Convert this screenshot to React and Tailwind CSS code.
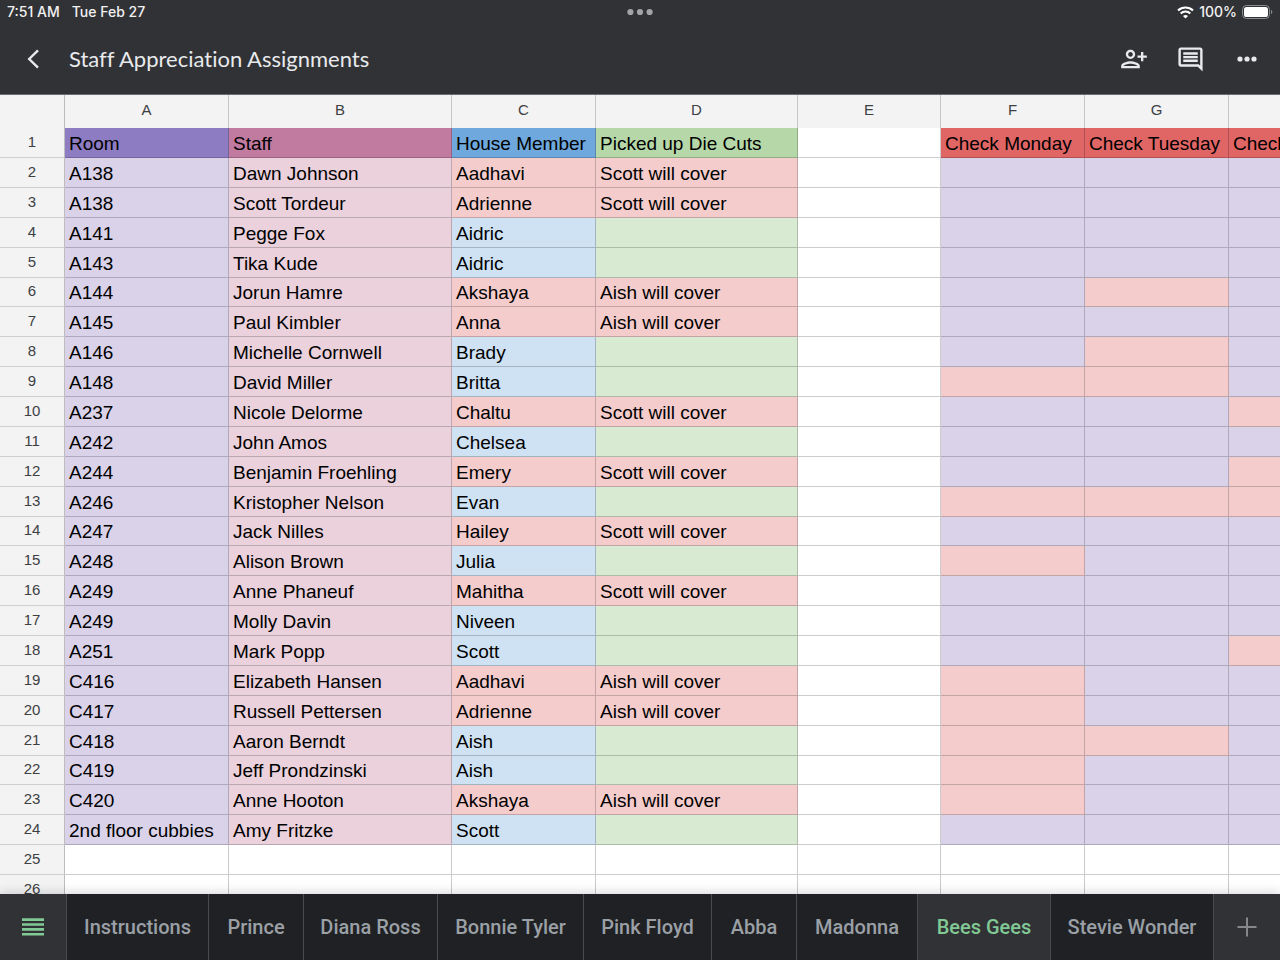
import React, { useState } from 'react';
import { MdOutlineComment } from 'react-icons/md';

const columns = [
  { name: 'A', width: 'w-[164px]' },
  { name: 'B', width: 'w-[223px]' },
  { name: 'C', width: 'w-[144px]' },
  { name: 'D', width: 'w-[202px]' },
  { name: 'E', width: 'w-[143px]' },
  { name: 'F', width: 'w-[144px]' },
  { name: 'G', width: 'w-[144px]' },
  { name: 'H', width: 'w-[144px]' },
];

const titles = [
  { text: 'Room', color: 'bg-[#8e7cc3]' },
  { text: 'Staff', color: 'bg-[#c27ba0]' },
  { text: 'House Member', color: 'bg-[#6fa8dc]' },
  { text: 'Picked up Die Cuts', color: 'bg-[#b6d7a8]' },
  { text: '', color: 'bg-white' },
  { text: 'Check Monday', color: 'bg-[#e06666]' },
  { text: 'Check Tuesday', color: 'bg-[#e06666]' },
  { text: 'Check Wednesday', color: 'bg-[#e06666]' },
];

// missed lists the check days (F, G, H) that are marked red
const rows = [
  { room: 'A138', staff: 'Dawn Johnson', member: 'Aadhavi', cover: 'Scott will cover', missed: '' },
  { room: 'A138', staff: 'Scott Tordeur', member: 'Adrienne', cover: 'Scott will cover', missed: '' },
  { room: 'A141', staff: 'Pegge Fox', member: 'Aidric', cover: '', missed: '' },
  { room: 'A143', staff: 'Tika Kude', member: 'Aidric', cover: '', missed: '' },
  { room: 'A144', staff: 'Jorun Hamre', member: 'Akshaya', cover: 'Aish will cover', missed: 'G' },
  { room: 'A145', staff: 'Paul Kimbler', member: 'Anna', cover: 'Aish will cover', missed: '' },
  { room: 'A146', staff: 'Michelle Cornwell', member: 'Brady', cover: '', missed: 'G' },
  { room: 'A148', staff: 'David Miller', member: 'Britta', cover: '', missed: 'FG' },
  { room: 'A237', staff: 'Nicole Delorme', member: 'Chaltu', cover: 'Scott will cover', missed: 'H' },
  { room: 'A242', staff: 'John Amos', member: 'Chelsea', cover: '', missed: '' },
  { room: 'A244', staff: 'Benjamin Froehling', member: 'Emery', cover: 'Scott will cover', missed: 'H' },
  { room: 'A246', staff: 'Kristopher Nelson', member: 'Evan', cover: '', missed: 'FGH' },
  { room: 'A247', staff: 'Jack Nilles', member: 'Hailey', cover: 'Scott will cover', missed: '' },
  { room: 'A248', staff: 'Alison Brown', member: 'Julia', cover: '', missed: 'F' },
  { room: 'A249', staff: 'Anne Phaneuf', member: 'Mahitha', cover: 'Scott will cover', missed: '' },
  { room: 'A249', staff: 'Molly Davin', member: 'Niveen', cover: '', missed: '' },
  { room: 'A251', staff: 'Mark Popp', member: 'Scott', cover: '', missed: 'H' },
  { room: 'C416', staff: 'Elizabeth Hansen', member: 'Aadhavi', cover: 'Aish will cover', missed: 'F' },
  { room: 'C417', staff: 'Russell Pettersen', member: 'Adrienne', cover: 'Aish will cover', missed: 'F' },
  { room: 'C418', staff: 'Aaron Berndt', member: 'Aish', cover: '', missed: 'FG' },
  { room: 'C419', staff: 'Jeff Prondzinski', member: 'Aish', cover: '', missed: 'F' },
  { room: 'C420', staff: 'Anne Hooton', member: 'Akshaya', cover: 'Aish will cover', missed: 'F' },
  { room: '2nd floor cubbies', staff: 'Amy Fritzke', member: 'Scott', cover: '', missed: '' },
];

const tabs = [
  { name: 'Instructions', width: 'w-[142px]' },
  { name: 'Prince', width: 'w-[95px]' },
  { name: 'Diana Ross', width: 'w-[134px]' },
  { name: 'Bonnie Tyler', width: 'w-[146px]' },
  { name: 'Pink Floyd', width: 'w-[128px]' },
  { name: 'Abba', width: 'w-[85px]' },
  { name: 'Madonna', width: 'w-[121px]' },
  { name: 'Bees Gees', width: 'w-[133px]' },
  { name: 'Stevie Wonder', width: 'w-[163px]' },
];

const RowNumber = ({ number }) => (
  <th
    scope="row"
    className="bg-[#f3f3f3] border-r border-b border-r-[#bdbdbd] border-b-[#cfcfcf] p-0 pb-[2px] text-center text-[15px] leading-5 font-normal text-[#3c4043]"
  >
    {number}
  </th>
);

const Cell = ({ color, children }) => (
  <td className={`border-r border-b border-black/20 px-1 pt-[2px] pb-0 leading-5 whitespace-nowrap overflow-hidden ${color}`}>
    {children}
  </td>
);

const StatusBar = () => (
  <div className="grid grid-cols-3 items-center h-6 px-[7px] text-sm font-medium text-[#f1f1f2]">
    <div className="flex gap-3">
      <span>7:51 AM</span>
      <span>Tue Feb 27</span>
    </div>
    <svg className="justify-self-center" width="26" height="8" viewBox="0 0 26 8" fill="#a3a4a7">
      <circle cx="3.4" cy="4" r="3.1" />
      <circle cx="13" cy="4" r="3.1" />
      <circle cx="22.6" cy="4" r="3.1" />
    </svg>
    <div className="flex items-center justify-end gap-[5px]">
      <svg width="17" height="13" viewBox="0 0 17 13" fill="none" stroke="#fff" strokeWidth="2.1">
        <path d="M1 4.6a10.8 10.8 0 0 1 15 0" />
        <path d="M3.7 7.5a6.9 6.9 0 0 1 9.6 0" />
        <path d="M8.5 12.6 6 10.1a3.6 3.6 0 0 1 5 0Z" fill="#fff" stroke="none" />
      </svg>
      <span>100%</span>
      <svg width="31" height="14" viewBox="0 0 31 14">
        <rect x="0.5" y="0.5" width="27" height="13" rx="4" fill="none" stroke="#8b8c8f" />
        <rect x="2" y="2" width="24" height="10" rx="2.6" fill="#fff" />
        <path d="M29 4.8c1.8.7 1.8 3.7 0 4.4Z" fill="#8b8c8f" />
      </svg>
    </div>
  </div>
);

const Toolbar = () => (
  <div className="flex items-center h-[70px] pl-[21px] pr-[19px] text-[#e8eaed]">
    <button aria-label="Back" className="flex justify-center w-6">
      <svg width="14" height="20" viewBox="0 0 14 20" fill="none" stroke="currentColor" strokeWidth="2.4">
        <path d="M12 1.4 3.2 10l8.8 8.6" />
      </svg>
    </button>
    <h1 className="flex-1 ml-6 font-['Lato',sans-serif] text-[22px] leading-7 [font-variant-ligatures:none]">
      Staff Appreciation Assignments
    </h1>
    <div className="flex items-center gap-7">
      <button aria-label="Share">
        <svg width="28" height="28" viewBox="0 0 24 24" fill="currentColor">
          <path d="M13 8c0-2.21-1.79-4-4-4S5 5.79 5 8s1.79 4 4 4 4-1.79 4-4zm-2 0c0 1.1-.9 2-2 2s-2-.9-2-2 .9-2 2-2 2 .9 2 2zM1 18v2h16v-2c0-2.66-5.33-4-8-4s-8 1.34-8 4zm2 0c.2-.71 3.3-2 6-2 2.69 0 5.78 1.28 6 2H3zM20 14v-3h3V9h-3V6h-2v3h-3v2h3v3h2z" />
        </svg>
      </button>
      <button aria-label="Comments">
        <MdOutlineComment size={29} />
      </button>
      <button aria-label="More">
        <svg width="28" height="28" viewBox="0 0 28 28" fill="currentColor">
          <circle cx="7" cy="14" r="2.6" />
          <circle cx="14" cy="14" r="2.6" />
          <circle cx="21" cy="14" r="2.6" />
        </svg>
      </button>
    </div>
  </div>
);

const Sheet = () => (
  <table className="table-fixed w-[1373px] border-separate border-spacing-0 font-['Liberation_Sans',Arial,sans-serif] text-[19px] text-black">
    <thead>
      <tr className="h-[33px]">
        <th className="w-[65px] bg-[#f3f3f3] border-r border-[#bdbdbd]"></th>
        {columns.map((column) => (
          <th
            key={column.name}
            scope="col"
            className={`${column.width} bg-[#f3f3f3] border-r border-[#c6c6c6] p-0 pb-[3px] text-[15px] leading-5 font-normal text-[#3c4043]`}
          >
            {column.name}
          </th>
        ))}
      </tr>
    </thead>
    <tbody>
      <tr className="h-[30px]">
        <RowNumber number={1} />
        {titles.map((title, index) => (
          <Cell key={index} color={title.color}>{title.text}</Cell>
        ))}
      </tr>
      {rows.map((row, index) => (
        <tr key={index} className={index % 8 === 4 ? 'h-[29px]' : 'h-[30px]'}>
          <RowNumber number={index + 2} />
          <Cell color="bg-[#d9d2e9]">{row.room}</Cell>
          <Cell color="bg-[#ead1dc]">{row.staff}</Cell>
          <Cell color={row.cover ? 'bg-[#f4cccc]' : 'bg-[#cfe2f3]'}>{row.member}</Cell>
          <Cell color={row.cover ? 'bg-[#f4cccc]' : 'bg-[#d9ead3]'}>{row.cover}</Cell>
          <Cell color="bg-white" />
          {['F', 'G', 'H'].map((day) => (
            <Cell key={day} color={row.missed.includes(day) ? 'bg-[#f4cccc]' : 'bg-[#d9d2e9]'} />
          ))}
        </tr>
      ))}
      {[25, 26, 27].map((number) => (
        <tr key={number} className="h-[30px]">
          <RowNumber number={number} />
          {columns.map((column) => (
            <Cell key={column.name} color="bg-white" />
          ))}
        </tr>
      ))}
    </tbody>
  </table>
);

const TabBar = () => {
  const [active, setActive] = useState('Bees Gees');

  return (
    <nav className="relative flex h-[66px] shrink-0 bg-[#313235] shadow-[0_0_12px_rgba(0,0,0,0.2)]">
      <button aria-label="All sheets" className="flex items-center justify-center w-[67px] shrink-0 border-r border-[#4a4b4e]">
        <svg width="22" height="18" viewBox="0 0 22 18" fill="#81c995">
          <path d="M0 0.3h22v2.6H0zM0 5.2h22v2.6H0zM0 10.1h22v2.6H0zM0 15h22v2.6H0z" />
        </svg>
      </button>
      {tabs.map((tab) => (
        <button
          key={tab.name}
          onClick={() => setActive(tab.name)}
          className={`${tab.width} shrink-0 border-r border-[#4a4b4e] font-['Roboto',sans-serif] text-xl font-medium whitespace-nowrap ${
            tab.name === active ? 'bg-[#313235] text-[#81c995]' : 'bg-[#202124] text-[#9aa0a6]'
          }`}
        >
          {tab.name}
        </button>
      ))}
      <button aria-label="Add sheet" className="flex flex-1 items-center justify-center">
        <svg width="20" height="20" viewBox="0 0 20 20" fill="none" stroke="#85878b" strokeWidth="2">
          <path d="M10 0.5v19M0.5 10h19" />
        </svg>
      </button>
    </nav>
  );
};

const App = () => {
  return (
    <div className="flex flex-col h-screen overflow-hidden bg-white font-['Inter',sans-serif]">
      <header className="shrink-0 bg-[#313235] border-b border-[#6b6c6f]">
        <StatusBar />
        <Toolbar />
      </header>
      <main className="flex-1 min-h-0 overflow-hidden">
        <Sheet />
      </main>
      <TabBar />
    </div>
  );
};

export default App;
